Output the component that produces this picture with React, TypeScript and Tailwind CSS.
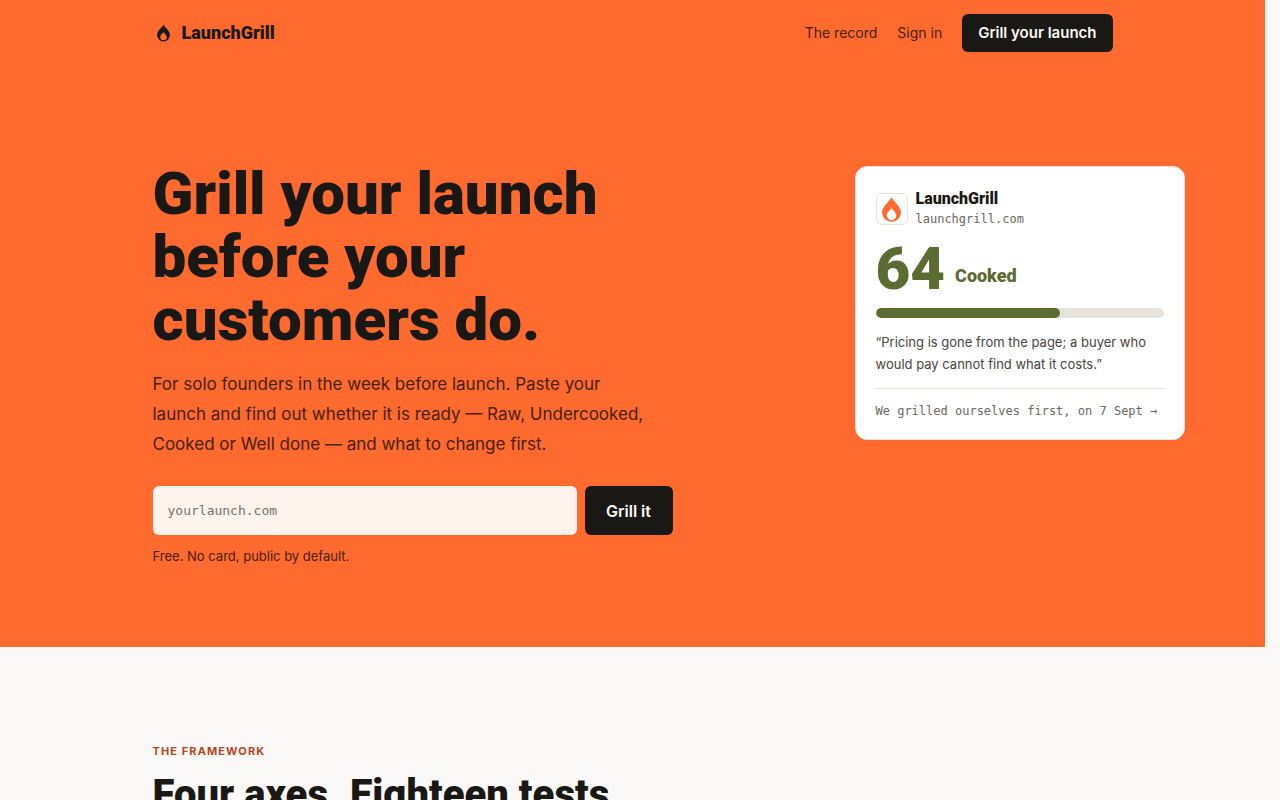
import type { FormEvent } from "react";

const score = { value: 64, verdict: "Cooked" };

const FlameIcon = ({ className }: { className: string }) => (
  <svg viewBox="0 0 20 26" className={className} fill="currentColor" aria-hidden="true">
    <path
      fillRule="evenodd"
      d="M10 0C11 3.5 20 9.2 20 16.2A10 9.8 0 0 1 0 16.2C0 9.2 9 3.5 10 0ZM10 11.5C9.5 13.4 5 15.6 5 19.3A5 5 0 0 0 15 19.3C15 15.6 10.5 13.4 10 11.5Z"
    />
  </svg>
);

const Header = () => (
  <header className="mx-auto flex h-[66px] max-w-[960px] items-center justify-between">
    <a href="#" className="flex items-center gap-3 pl-1 font-['Roboto',sans-serif] text-lg font-black">
      <FlameIcon className="h-[18px] w-[13px]" />
      LaunchGrill
    </a>
    <nav className="flex items-center gap-5 text-sm text-[#47200f]">
      <a href="#record">The record</a>
      <a href="#sign-in">Sign in</a>
      <a
        href="#grill"
        className="flex h-[38px] items-center rounded-md bg-[#1a1814] px-4 text-[15px] font-semibold text-[#faf8f5]"
      >
        Grill your launch
      </a>
    </nav>
  </header>
);

const LaunchForm = () => {
  const handleSubmit = (e: FormEvent) => e.preventDefault();

  return (
    <form id="grill" onSubmit={handleSubmit} className="mt-[27px] flex gap-2">
      <input
        type="text"
        aria-label="Launch URL"
        placeholder="yourlaunch.com"
        className="h-[49px] min-w-0 flex-1 rounded-md bg-[#fff3ed] px-[15px] font-['DejaVu_Sans_Mono',monospace] text-[13px] placeholder:text-[#78716a]"
      />
      <button
        type="submit"
        className="h-[49px] w-[88px] rounded-md bg-[#1a1814] text-base font-semibold text-[#faf8f5]"
      >
        Grill it
      </button>
    </form>
  );
};

const ScoreCard = () => (
  <a
    href="#record"
    className="block w-[330px] shrink-0 rounded-xl border border-[#e5e3db] bg-white px-5 pt-[22px] pb-[18px] lg:-mr-[72px]"
  >
    <div className="flex items-center gap-2">
      <span className="flex size-8 items-center justify-center rounded-md border border-[#e5e3db] text-[#ff6a2e]">
        <FlameIcon className="h-[25px] w-[19px]" />
      </span>
      <div>
        <p className="font-['Roboto',sans-serif] text-base leading-5 font-black">LaunchGrill</p>
        <p className="font-['DejaVu_Sans_Mono',monospace] text-xs leading-5 text-[#6b675f]">
          launchgrill.com
        </p>
      </div>
    </div>
    <div className="mt-3 flex items-end gap-[10px] font-['Roboto',sans-serif] font-black text-[#5c6b32]">
      <span className="text-[60px] leading-[56px]">{score.value}</span>
      <span className="text-lg leading-[42px]">{score.verdict}</span>
    </div>
    <div className="mt-[11px] h-[10px] overflow-hidden rounded-full bg-[#e5e3db]">
      <div className="h-full rounded-full bg-[#5c6b32]" style={{ width: `${score.value}%` }} />
    </div>
    <p className="mt-[13px] text-[13px] leading-[22px] text-[#47443e]">
      “Pricing is gone from the page; a buyer who would pay cannot find what it costs.”
    </p>
    <p className="mt-[13px] border-t border-[#e5e3db] pt-3 font-['DejaVu_Sans_Mono',monospace] text-xs leading-5 text-[#6b675f]">
      We grilled ourselves first, on 7 Sept →
    </p>
  </a>
);

const Hero = () => (
  <section className="mx-auto flex max-w-[960px] items-start justify-between pt-24 pb-20">
    <div className="w-[520px]">
      <h1 className="font-['Roboto',sans-serif] text-[60px] leading-[63px] font-black">
        Grill your launch
        <br />
        before your
        <br />
        customers do.
      </h1>
      <p className="mt-[18px] max-w-[504px] text-[17px] leading-[30px] text-[#47200f]">
        For solo founders in the week before launch. Paste your
        <br />
        launch and find out whether it is ready — Raw, Undercooked, Cooked or Well done — and what
        to change first.
      </p>
      <LaunchForm />
      <p className="mt-3 text-[13px] leading-[18px] text-[#47200f]">
        Free. No card, public by default.
      </p>
    </div>
    <div className="mt-1">
      <ScoreCard />
    </div>
  </section>
);

const Framework = () => (
  <section className="mx-auto max-w-[960px] pt-24">
    <p className="text-[11px] leading-4 font-bold tracking-widest text-[#b5451b] uppercase">
      The framework
    </p>
    <h2 className="mt-3 font-['Roboto',sans-serif] text-[40px] leading-[48px] font-black">
      Four axes. Eighteen tests.
    </h2>
  </section>
);

const App = () => {
  return (
    <div className="min-h-screen bg-[#fbf9f7] pr-[15px] font-['Inter',sans-serif] text-[#1a1814]">
      <div className="bg-[#ff6a2e] pb-[2px]">
        <Header />
        <Hero />
      </div>
      <main>
        <Framework />
      </main>
    </div>
  );
};

export default App;
